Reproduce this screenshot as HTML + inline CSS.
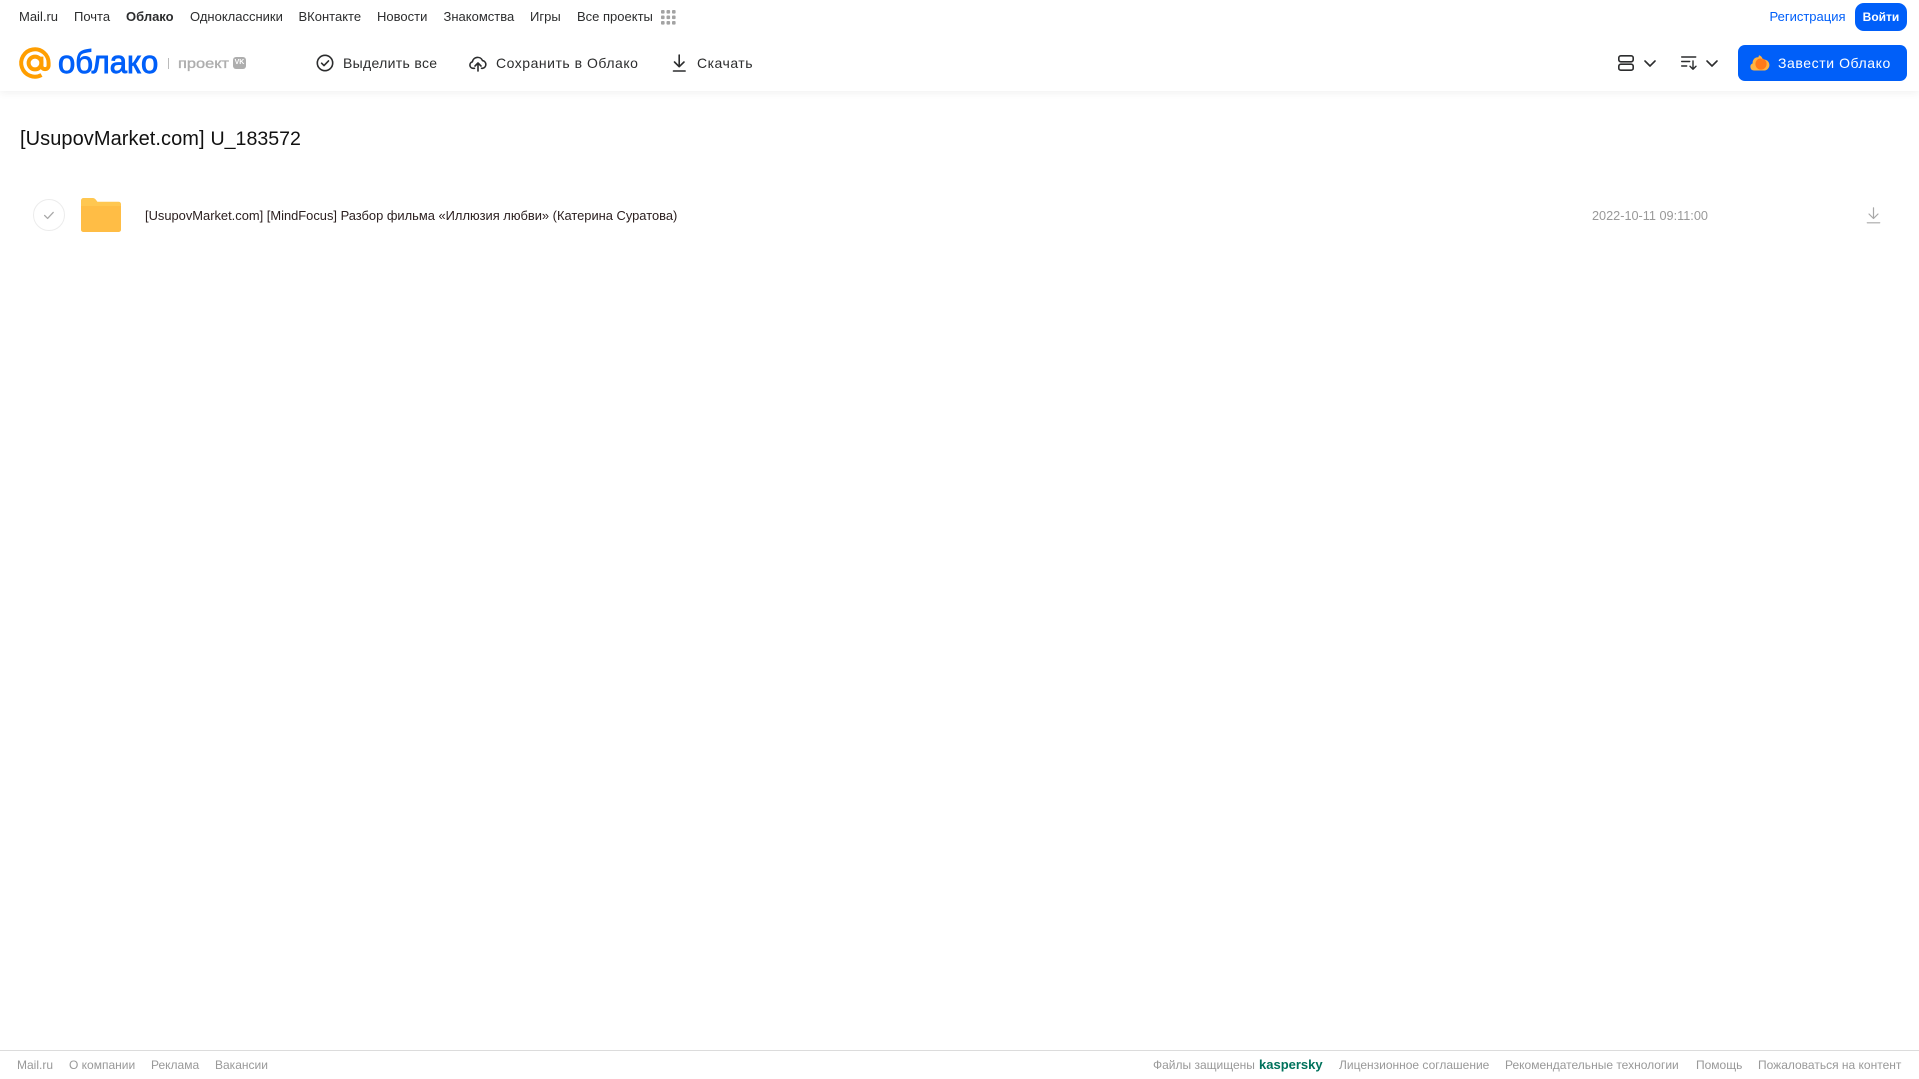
<!DOCTYPE html>
<html lang="ru">
<head>
<meta charset="utf-8">
<title>Облако</title>
<style>
html,body{margin:0;padding:0;width:1919px;height:1079px;overflow:hidden;background:#fff;font-family:"Liberation Sans",Arial,sans-serif;}
.t{position:absolute;white-space:nowrap;line-height:16px;height:16px;}
.n{top:9px;font-size:13px;color:#2c2d2e;}
.a{top:55px;font-size:14px;color:#2c2d2e;letter-spacing:.32px;}
.f{top:1057px;font-size:12px;color:#999;}
svg{position:absolute;overflow:visible;}
#hdr{position:absolute;left:0;top:0;width:1919px;height:91px;background:#fff;box-shadow:0 2px 8px rgba(0,0,0,.06);}
.btn{position:absolute;background:#005ff9;}
</style>
</head>
<body>
<div id="hdr"></div>

<span class="t n" style="left:19px">Mail.ru</span>
<span class="t n" style="left:74px">Почта</span>
<span class="t n" style="left:126px;font-weight:bold">Облако</span>
<span class="t n" style="left:190px">Одноклассники</span>
<span class="t n" style="left:298.500px">ВКонтакте</span>
<span class="t n" style="left:377px">Новости</span>
<span class="t n" style="left:443.500px">Знакомства</span>
<span class="t n" style="left:530px">Игры</span>
<span class="t n" style="left:577px">Все проекты</span>
<svg style="left:661px;top:10px" width="15" height="15" viewBox="0 0 15 15" fill="#a3a3a3">
<rect x="0" y="0" width="3.6" height="3.6" rx="1"/><rect x="5.5" y="0" width="3.6" height="3.6" rx="1"/><rect x="11" y="0" width="3.6" height="3.6" rx="1"/>
<rect x="0" y="5.5" width="3.6" height="3.6" rx="1"/><rect x="5.5" y="5.5" width="3.6" height="3.6" rx="1"/><rect x="11" y="5.5" width="3.6" height="3.6" rx="1"/>
<rect x="0" y="11" width="3.6" height="3.6" rx="1"/><rect x="5.5" y="11" width="3.6" height="3.6" rx="1"/><rect x="11" y="11" width="3.6" height="3.6" rx="1"/>
</svg>

<span class="t n" style="left:1769.500px;color:#005ff9">Регистрация</span>
<div class="btn" style="left:1855px;top:3px;width:52px;height:28px;border-radius:9px"></div>
<span class="t" style="left:1855px;width:52px;text-align:center;color:#fff;font-weight:bold;top:9px;font-size:12px">Войти</span>

<!-- logo -->
<svg style="left:19px;top:47px" width="33" height="33" viewBox="0 0 33 33" fill="none" stroke="#ff9e00" stroke-width="4">
<circle cx="16" cy="16" r="6.4"/>
<path d="M22.4 9.6V18.500a3.600 3.600 0 0 0 7.200 0V16A13.700 13.700 0 1 0 22.500 28"/>
</svg>
<span class="t" style="left:58px;top:44px;height:36px;line-height:36px;font-size:32px;color:#005ff9;-webkit-text-stroke:.9px #005ff9;transform:scaleX(.97);transform-origin:left center">облако</span>
<div style="position:absolute;left:168px;top:58px;width:1px;height:11px;background:#bbb"></div>
<span class="t" style="left:178px;top:55px;font-size:14px;color:#aeaeae;-webkit-text-stroke:.35px #aeaeae;transform:scaleX(1.17);transform-origin:left center">проект</span>
<div style="position:absolute;left:233px;top:57px;width:13px;height:12px;border-radius:3px;background:#aeaeae"></div>
<span class="t" style="left:233px;top:57px;width:13px;height:12px;line-height:12px;font-size:7px;font-weight:bold;color:#fff;text-align:center">VK</span>

<!-- actions -->
<svg style="left:316px;top:54px" width="18" height="18" viewBox="0 0 18 18" fill="none" stroke="#2c2d2e" stroke-width="1.6">
<circle cx="9" cy="9" r="7.7"/><path d="M5.6 9.2l2.4 2.4 4.5-4.7" stroke-linecap="round" stroke-linejoin="round"/>
</svg>
<span class="t a" style="left:343px">Выделить все</span>
<svg style="left:469px;top:54px" width="18" height="18" viewBox="0 0 18 18" fill="none" stroke="#2c2d2e" stroke-width="1.6" stroke-linecap="round" stroke-linejoin="round">
<path d="M5.5 14.300H4.300A3.300 3.300 0 0 1 3.400 7.800 5.300 5.300 0 0 1 13.500 6.600 3.900 3.900 0 0 1 13.600 14.300H12.500"/>
<path d="M9 17V9.300M6 12l3-3 3 3"/>
</svg>
<span class="t a" style="left:496px;letter-spacing:.52px">Сохранить в Облако</span>
<svg style="left:672px;top:54px" width="15" height="18" viewBox="0 0 15 18" fill="none" stroke="#2c2d2e" stroke-width="1.6" stroke-linecap="round" stroke-linejoin="round">
<path d="M7.200 1v11.500M2.500 8l4.700 4.700L12 8"/><path d="M1.500 17h11.600"/>
</svg>
<span class="t a" style="left:697px;letter-spacing:.5px">Скачать</span>

<svg style="left:1618px;top:55px" width="16" height="16" viewBox="0 0 16 16" fill="none" stroke="#2c2d2e" stroke-width="1.6">
<rect x=".8" y=".8" width="14.400" height="6" rx="2"/><rect x=".8" y="9.200" width="14.400" height="6" rx="2"/>
</svg>
<svg style="left:1644px;top:60px" width="12" height="7" viewBox="0 0 12 7" fill="none" stroke="#2c2d2e" stroke-width="1.600" stroke-linecap="round" stroke-linejoin="round"><path d="M1 1l5 5 5-5"/></svg>
<svg style="left:1681px;top:56px" width="16" height="14" viewBox="0 0 16 14" fill="none" stroke="#2c2d2e" stroke-width="1.400" stroke-linecap="round" stroke-linejoin="round">
<path d="M.7 1h14M.7 5.500h8M.7 10h5"/><path d="M12 5v8M9 10.300l3 3 3-3"/>
</svg>
<svg style="left:1706px;top:60px" width="12" height="7" viewBox="0 0 12 7" fill="none" stroke="#2c2d2e" stroke-width="1.600" stroke-linecap="round" stroke-linejoin="round"><path d="M1 1l5 5 5-5"/></svg>

<div class="btn" style="left:1738px;top:45px;width:169px;height:36px;border-radius:7px"></div>
<svg style="left:1750px;top:54px" width="20" height="17" viewBox="0 0 20 17">
<path d="M4 16.500A3.700 3.700 0 0 1 2.600 9.400 5.500 5.500 0 0 1 12.600 5.600 5.500 5.500 0 0 1 15 16.500Z" fill="#ffb340"/>
<circle cx="11" cy="10" r="5.600" fill="#ff7a1a"/>
<path d="M9 1.200A5 5 0 0 1 12.600 5.600 4 4 0 0 0 8 4.600Z" fill="#ffb340"/>
</svg>
<span class="t a" style="left:1778px;color:#fff;letter-spacing:.58px">Завести Облако</span>

<!-- title -->
<span class="t" style="left:20px;top:127px;height:24px;line-height:24px;font-size:20px;color:#111;letter-spacing:.07px">[UsupovMarket.com]</span>
<span class="t" style="left:210.500px;top:127px;height:24px;line-height:24px;font-size:19.600px;color:#111">U_183572</span>

<!-- row -->
<svg style="left:32px;top:198px" width="34" height="34" viewBox="0 0 34 34" fill="none">
<circle cx="17" cy="17" r="15.500" stroke="#ececec" stroke-width="1"/>
<path d="M12.600 17.400l3 3 5.600-6" stroke="#a8a8a8" stroke-width="1.300" stroke-linecap="round" stroke-linejoin="round"/>
</svg>
<svg style="left:81px;top:198px" width="40" height="34" viewBox="0 0 41 34" preserveAspectRatio="none">
<path d="M2.500 0H12c1.500 0 2.500.800 3.300 1.800L16.800 3.700H38.500A2.500 2.500 0 0 1 41 6.200V31.500A2.500 2.500 0 0 1 38.500 34H2.500A2.500 2.500 0 0 1 0 31.500V2.500A2.500 2.500 0 0 1 2.500 0Z" fill="#ffc750"/>
<path d="M0 8H41V31.500A2.500 2.500 0 0 1 38.500 34H2.500A2.500 2.500 0 0 1 0 31.500Z" fill="#ffbd45"/>
</svg>
<span class="t" style="left:145px;top:208px;font-size:12.9px;color:#2c2020">[UsupovMarket.com] [MindFocus] Разбор фильма «Иллюзия любви» (Катерина Суратова)</span>
<span class="t" style="left:1592px;top:208px;font-size:12.7px;color:#999">2022-10-11 09:11:00</span>
<svg style="left:1866px;top:207px" width="15" height="17" viewBox="0 0 15 17" fill="none" stroke="#a8a8a8" stroke-width="1.200" stroke-linecap="round" stroke-linejoin="round">
<path d="M7.500 .8V11.300M3 7l4.500 4.500L12 7"/><path d="M1.300 15.800H13.700"/>
</svg>

<!-- footer -->
<div style="position:absolute;left:0;top:1050px;width:1919px;height:1px;background:#dcdcdc"></div>
<span class="t f" style="left:17px">Mail.ru</span>
<span class="t f" style="left:69px">О компании</span>
<span class="t f" style="left:151px">Реклама</span>
<span class="t f" style="left:215px">Вакансии</span>
<span class="t f" style="left:1153px">Файлы защищены</span>
<span class="t f" style="left:1259px;font-size:13px;font-weight:bold;color:#00725c">kaspersky</span>
<span class="t f" style="left:1339px">Лицензионное соглашение</span>
<span class="t f" style="left:1505px">Рекомендательные технологии</span>
<span class="t f" style="left:1696px">Помощь</span>
<span class="t f" style="left:1758px">Пожаловаться на контент</span>
</body>
</html>
